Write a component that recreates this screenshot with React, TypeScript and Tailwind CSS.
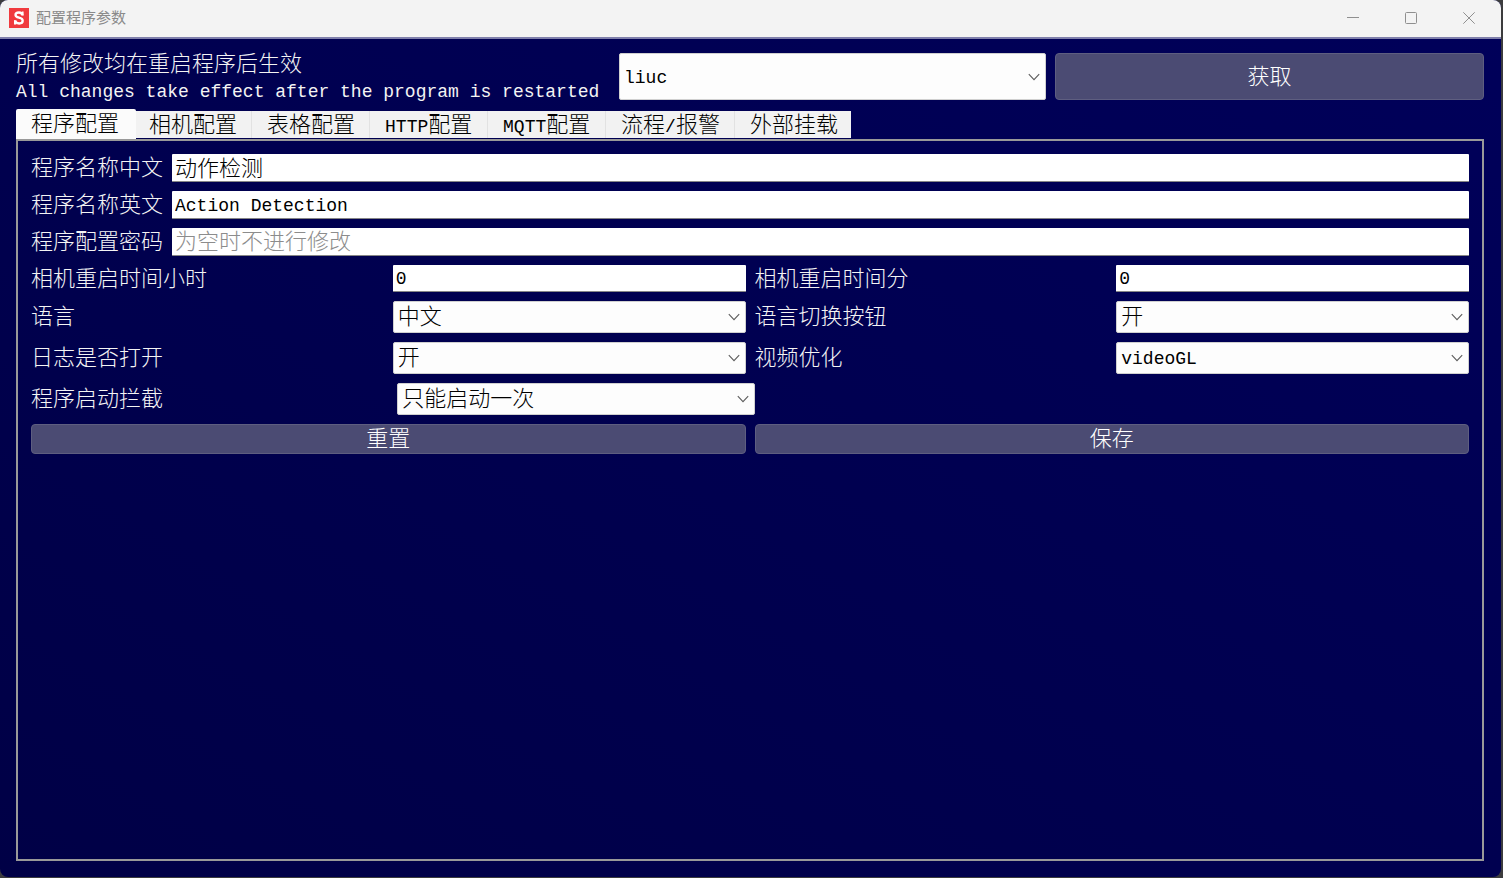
import { useState, type ReactNode } from "react";

const TABS = [
  { id: "program", label: "程序配置" },
  { id: "camera", label: "相机配置" },
  { id: "table", label: "表格配置" },
  { id: "http", label: "HTTP配置" },
  { id: "mqtt", label: "MQTT配置" },
  { id: "flow", label: "流程/报警" },
  { id: "mount", label: "外部挂载" },
];

function Latin({ children }: { children: ReactNode }) {
  return (
    <span className="font-['Liberation_Mono',monospace] text-[18px] leading-none font-normal">
      {children}
    </span>
  );
}

// Sets the ASCII runs of a mixed label in the monospace face
function Mixed({ text }: { text: string }) {
  return (
    <span>
      {text
        .split(/([\x21-\x7e]+)/)
        .map((part, i) => (i % 2 === 1 ? <Latin key={i}>{part}</Latin> : part))}
    </span>
  );
}

function TextField({
  id,
  value,
  placeholder,
  type = "text",
  latin = false,
  short = false,
}: {
  id: string;
  value: string;
  placeholder?: string;
  type?: string;
  latin?: boolean;
  short?: boolean;
}) {
  return (
    <input
      id={id}
      type={type}
      defaultValue={value}
      placeholder={placeholder}
      className={`w-full min-w-0 rounded-[1px] border-b border-[#868686] bg-white px-[3px] text-black outline-none placeholder:text-[#8c8c8c] ${
        short ? "h-[27px]" : "h-7"
      } ${latin ? "pt-[2px] font-['Liberation_Mono',monospace] text-[18px]" : ""} ${
        !latin && value ? "pb-1 leading-[22px]" : ""
      }`}
    />
  );
}

function SelectField({
  id,
  options,
  latin = false,
  tall = false,
  label,
}: {
  id: string;
  options: string[];
  latin?: boolean;
  tall?: boolean;
  label?: string;
}) {
  return (
    <div className="relative min-w-0 flex-1">
      <select
        id={id}
        aria-label={label}
        className={`block w-full appearance-none rounded-[2px] border border-[#d0d0d0] bg-[#fdfdfd] pr-8 pl-1 text-black outline-none ${
          tall ? "h-[47px]" : "h-8"
        } ${latin ? "pt-[2px] font-['Liberation_Mono',monospace] text-[18px]" : ""}`}
      >
        {options.map((o) => (
          <option key={o}>{o}</option>
        ))}
      </select>
      <svg
        className="pointer-events-none absolute top-1/2 right-[6px] h-3 w-3 -translate-y-1/2"
        viewBox="0 0 12 12"
        fill="none"
        stroke="#5c5c5c"
        strokeWidth="1.1"
      >
        <path d="M0.8 3.2 6 8.6 11.2 3.2" />
      </svg>
    </div>
  );
}

function ActionButton({ children, tall = false }: { children: ReactNode; tall?: boolean }) {
  return (
    <button
      type="button"
      className={`flex min-w-0 flex-1 items-center justify-center rounded-[4px] border border-[#5e5e80] bg-[#4b4b73] text-white ${
        tall ? "h-[47px]" : "h-[30px]"
      }`}
    >
      {children}
    </button>
  );
}

function TitleBar() {
  return (
    <header className="flex h-[39px] items-center border-b-2 border-[#7f7fab] bg-[#f3f3f3] pb-px pl-[9px]">
      <svg className="h-5 w-5" viewBox="0 0 20 20">
        <rect width="20" height="20" fill="#f03a3e" />
        <path
          d="M13.4 7.4C13.2 5.4 12 4.5 10 4.5 7.8 4.5 6.5 5.4 6.5 7 6.5 8.7 8 9.2 10 9.7 12.2 10.2 13.7 10.9 13.7 12.8 13.7 14.6 12.3 15.5 10.1 15.5 7.9 15.5 6.5 14.5 6.2 12.4"
          fill="none"
          stroke="#fff"
          strokeWidth="2.3"
        />
        <path d="M12.8 3.4H14.6V7.6H13.2ZM5 12.2H6.5L7.4 16.6H5Z" fill="#fff" />
      </svg>
      <h1 className="ml-[7px] text-[15px] text-[#8a8a8a]">配置程序参数</h1>
      <div className="ml-auto flex pr-[3px] text-[#8f8f8f]">
        <button type="button" aria-label="最小化" className="flex h-9 w-[58px] items-center justify-center">
          <svg className="h-3 w-3" viewBox="0 0 12 12" fill="none" stroke="currentColor">
            <path d="M0 5.5H12" />
          </svg>
        </button>
        <button type="button" aria-label="最大化" className="flex h-9 w-[58px] items-center justify-center">
          <svg className="h-3 w-3" viewBox="0 0 12 12" fill="none" stroke="currentColor">
            <rect x="0.5" y="0.5" width="11" height="11" rx="1" />
          </svg>
        </button>
        <button type="button" aria-label="关闭" className="flex h-9 w-[58px] items-center justify-center">
          <svg className="h-3 w-3" viewBox="0 0 12 12" fill="none" stroke="currentColor">
            <path d="M0.3 0.3 11.7 11.7M11.7 0.3 0.3 11.7" />
          </svg>
        </button>
      </div>
    </header>
  );
}

function ProgramPanel() {
  return (
    <form className="flex flex-col gap-[9px]" onSubmit={(e) => e.preventDefault()}>
      {/* Names and password */}
      <div className="grid grid-cols-[auto_1fr] items-center gap-[9px]">
        <label htmlFor="name-cn">程序名称中文</label>
        <TextField id="name-cn" value="动作检测" />
        <label htmlFor="name-en">程序名称英文</label>
        <TextField id="name-en" value="Action Detection" latin />
        <label htmlFor="password">程序配置密码</label>
        <TextField id="password" type="password" value="" placeholder="为空时不进行修改" />
      </div>

      {/* Two settings per row */}
      <div className="grid grid-cols-4 items-center gap-[9px]">
        <label htmlFor="restart-hour">相机重启时间小时</label>
        <TextField id="restart-hour" value="0" latin short />
        <label htmlFor="restart-minute">相机重启时间分</label>
        <TextField id="restart-minute" value="0" latin short />
        <label htmlFor="language">语言</label>
        <SelectField id="language" options={["中文", "英文"]} />
        <label htmlFor="language-switch">语言切换按钮</label>
        <SelectField id="language-switch" options={["开", "关"]} />
        <label htmlFor="log">日志是否打开</label>
        <SelectField id="log" options={["开", "关"]} />
        <label htmlFor="video">视频优化</label>
        <SelectField id="video" options={["videoGL", "video"]} latin />
      </div>

      <div className="flex items-center">
        <label htmlFor="launch" className="mr-[9px] flex-1">
          程序启动拦截
        </label>
        <SelectField id="launch" options={["只能启动一次", "不拦截"]} />
        <div className="flex-2" />
      </div>

      <div className="flex gap-[9px]">
        <ActionButton>重置</ActionButton>
        <ActionButton>保存</ActionButton>
      </div>
    </form>
  );
}

export default function App() {
  const [active, setActive] = useState("program");

  return (
    <div className="flex min-h-screen flex-col bg-[#3c3c3e] pr-[2px] pb-px font-['Liberation_Serif','Noto_Sans_CJK_SC',sans-serif]">
      <div className="flex flex-1 flex-col overflow-hidden rounded-[8px] bg-linear-to-tr from-[#000046] to-[#00005a]">
        <TitleBar />

        <main className="flex flex-1 flex-col pt-3 pr-[17px] pb-4 pl-4 text-[22px] leading-[26px] font-light text-[#f4f4f4]">
          <div className="flex items-start gap-[9px]">
            <p className="w-[594px] shrink-0">
              所有修改均在重启程序后生效
              <br />
              <Latin>All changes take effect after the program is restarted</Latin>
            </p>
            <div className="mt-[2px] flex flex-1 gap-[9px]">
              <SelectField id="user" label="用户" options={["liuc"]} latin tall />
              <ActionButton tall>获取</ActionButton>
            </div>
          </div>

          <div role="tablist" className="mt-[6px] flex items-end">
            {TABS.map((t) => (
              <button
                key={t.id}
                type="button"
                role="tab"
                aria-selected={active === t.id}
                onClick={() => setActive(t.id)}
                className={`flex min-w-[118px] items-center whitespace-nowrap text-black last:min-w-[116px] ${
                  active === t.id
                    ? "z-10 -mr-[2px] h-[30px] rounded-t-[2px] bg-[#fbfbfb] pr-[17px] pl-[15px]"
                    : "mb-px h-[27px] border-r border-[#e2e2e2] bg-[#f2f2f2] pr-[14px] pl-[15px] last:border-r-0 last:pr-[13px]"
                }`}
              >
                <Mixed text={t.label} />
              </button>
            ))}
          </div>

          <section role="tabpanel" className="flex-1 border-2 border-[#999999] p-[13px]">
            {active === "program" && <ProgramPanel />}
          </section>
        </main>
      </div>
    </div>
  );
}
